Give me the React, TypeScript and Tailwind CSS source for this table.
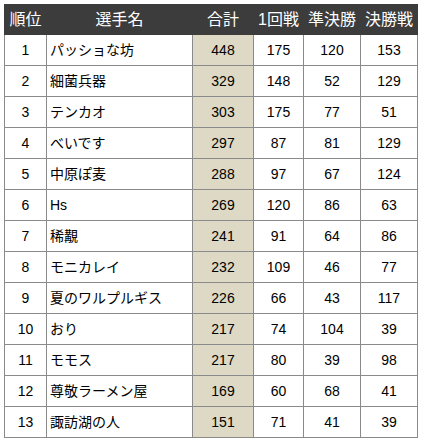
import React from 'react'

// ── Data ─────────────────────────────────────────────────────────────────────

type Row = { rank: number; name: string; total: number; r1: number; semi: number; final: number }

const ROWS: Row[] = [
  { rank: 1,  name: 'パッショな坊',     total: 448, r1: 175, semi: 120, final: 153 },
  { rank: 2,  name: '細菌兵器',         total: 329, r1: 148, semi: 52,  final: 129 },
  { rank: 3,  name: 'テンカオ',         total: 303, r1: 175, semi: 77,  final: 51 },
  { rank: 4,  name: 'べいです',         total: 297, r1: 87,  semi: 81,  final: 129 },
  { rank: 5,  name: '中原ぽ麦',         total: 288, r1: 97,  semi: 67,  final: 124 },
  { rank: 6,  name: 'Hs',               total: 269, r1: 120, semi: 86,  final: 63 },
  { rank: 7,  name: '稀覯',             total: 241, r1: 91,  semi: 64,  final: 86 },
  { rank: 8,  name: 'モニカレイ',       total: 232, r1: 109, semi: 46,  final: 77 },
  { rank: 9,  name: '夏のワルプルギス', total: 226, r1: 66,  semi: 43,  final: 117 },
  { rank: 10, name: 'おり',             total: 217, r1: 74,  semi: 104, final: 39 },
  { rank: 11, name: 'モモス',           total: 217, r1: 80,  semi: 39,  final: 98 },
  { rank: 12, name: '尊敬ラーメン屋',   total: 169, r1: 60,  semi: 68,  final: 41 },
  { rank: 13, name: '諏訪湖の人',       total: 151, r1: 71,  semi: 41,  final: 39 },
]

const FONT = { fontFamily: '"Liberation Sans", "Noto Sans CJK JP", sans-serif' }

const cell = 'border border-[#8a8a8a] h-[31px] p-0 text-[14px] text-black'

// ── Page ─────────────────────────────────────────────────────────────────────

export default function App() {
  return (
    <div className="w-[425px] h-[443px] bg-white pt-[4px] pl-[4px]" style={FONT}>
      <table className="border-collapse table-fixed w-[413px]">
        <colgroup>
          <col className="w-[42px]" />
          <col className="w-[146px]" />
          <col className="w-[61px]" />
          <col className="w-[50px]" />
          <col className="w-[57px]" />
          <col className="w-[57px]" />
        </colgroup>
        <thead>
          <tr className="bg-[#3c3c3c] text-white h-[30px]">
            <th className="font-normal text-[16px] text-center p-0 border border-[#3c3c3c]">順位</th>
            <th className="font-normal text-[16px] text-center p-0 border border-[#3c3c3c]">選手名</th>
            <th className="font-normal text-[16px] text-center p-0 border border-[#3c3c3c]">合計</th>
            <th className="font-normal text-[16px] text-center p-0 border border-[#3c3c3c]">1回戦</th>
            <th className="font-normal text-[16px] text-center p-0 border border-[#3c3c3c]">準決勝</th>
            <th className="font-normal text-[16px] text-center p-0 border border-[#3c3c3c]">決勝戦</th>
          </tr>
        </thead>
        <tbody>
          {ROWS.map(r => (
            <tr key={r.rank}>
              <td className={`${cell} text-center`}>{r.rank}</td>
              <td className={`${cell} text-left pl-[3px]`}>{r.name}</td>
              <td className={`${cell} text-center bg-[#ddd9c4]`}>{r.total}</td>
              <td className={`${cell} text-center`}>{r.r1}</td>
              <td className={`${cell} text-center`}>{r.semi}</td>
              <td className={`${cell} text-center`}>{r.final}</td>
            </tr>
          ))}
        </tbody>
      </table>
    </div>
  )
}
